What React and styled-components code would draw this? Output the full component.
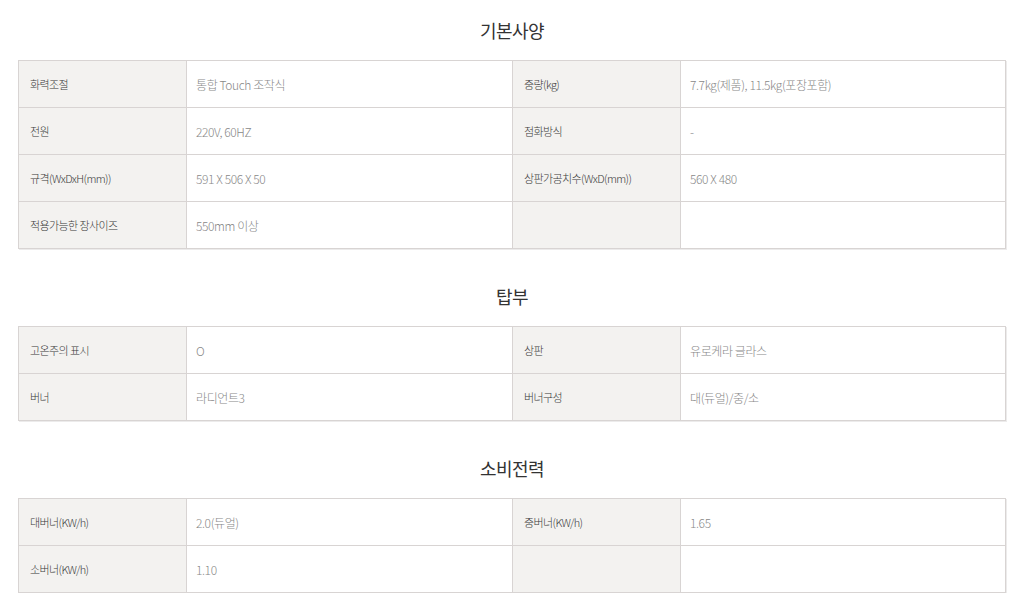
import styled, { createGlobalStyle } from "styled-components";

const GlobalStyle = createGlobalStyle`
  body {
    margin: 0;
    background: #fff;
    font-family: "Noto Sans CJK KR", "Noto Sans", sans-serif;
  }
`;

const sections = [
  {
    title: "기본사양",
    rows: [
      ["화력조절", "통합 Touch 조작식", "중량(kg)", "7.7kg(제품), 11.5kg(포장포함)"],
      ["전원", "220V, 60HZ", "점화방식", "-"],
      ["규격(WxDxH(mm))", "591 X 506 X 50", "상판가공치수(WxD(mm))", "560 X 480"],
      ["적용가능한 장사이즈", "550mm 이상", "", ""],
    ],
  },
  {
    title: "탑부",
    rows: [
      ["고온주의 표시", "O", "상판", "유로케라 글라스"],
      ["버너", "라디언트3", "버너구성", "대(듀얼)/중/소"],
    ],
  },
  {
    title: "소비전력",
    rows: [
      ["대버너(KW/h)", "2.0(듀얼)", "중버너(KW/h)", "1.65"],
      ["소버너(KW/h)", "1.10", "", ""],
    ],
  },
];

const App = () => {
  return (
    <>
      <GlobalStyle />
      <Page>
        {sections.map((s) => (
          <Section key={s.title}>
            <Title>{s.title}</Title>
            <Table>
              <colgroup>
                <col width="168" />
                <col width="326" />
                <col width="168" />
                <col />
              </colgroup>
              <tbody>
                {s.rows.map((r, i) => (
                  <tr key={i}>
                    <Label>{r[0]}</Label>
                    <Value>{r[1]}</Value>
                    <Label>{r[2]}</Label>
                    <Value>{r[3]}</Value>
                  </tr>
                ))}
              </tbody>
            </Table>
          </Section>
        ))}
      </Page>
    </>
  );
};

const Page = styled.div`
  padding: 0 18px;
  display: flex;
  flex-direction: column;
  gap: 17px;
`;

const Section = styled.section`
  display: flex;
  flex-direction: column;
`;

const Title = styled.h2`
  margin: 0;
  height: 60px;
  display: flex;
  align-items: center;
  justify-content: center;
  font-size: 18px;
  font-weight: 400;
  color: #333;
  letter-spacing: -0.5px;
`;

const Table = styled.table`
  width: 988px;
  border-collapse: collapse;
  table-layout: fixed;
  border: 1px solid #d8d4d3;
  box-shadow: 1px 1px 0 #ecebeb;
`;

const Label = styled.td`
  height: 46px;
  padding: 0 0 0 11px;
  background: #f3f2f0;
  border: 1px solid #d8d4d3;
  font-size: 11px;
  font-weight: 300;
  color: #3a3a3a;
  letter-spacing: -0.6px;
`;

const Value = styled.td`
  height: 46px;
  padding: 0 0 0 9px;
  background: #fff;
  border: 1px solid #d8d4d3;
  font-size: 12px;
  font-weight: 300;
  color: #888;
  letter-spacing: -0.4px;
`;

export default App;
